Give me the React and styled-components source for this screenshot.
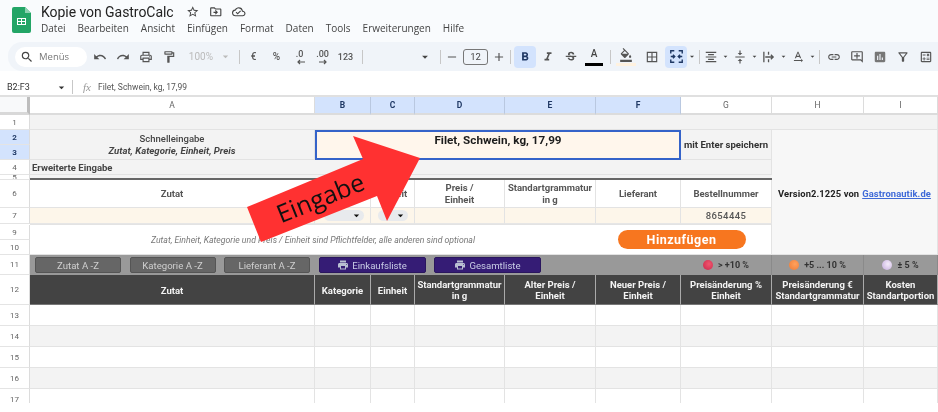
import styled, { createGlobalStyle } from "styled-components";
import {
  MdStarBorder, MdOutlineDriveFileMove, MdOutlineCloudDone, MdSearch, MdUndo, MdRedo,
  MdOutlinePrint, MdOutlineFormatPaint, MdArrowDropDown, MdAdd, MdRemove, MdFormatBold,
  MdFormatItalic, MdStrikethroughS, MdOutlineFormatColorFill, MdBorderAll,
  MdFormatAlignCenter, MdVerticalAlignCenter, MdTextRotationNone, MdLink, MdOutlineAddComment,
  MdInsertChart, MdOutlineFilterAlt, MdOutlineCalculate, MdLocalPrintshop,
} from "react-icons/md";

const GlobalStyle = createGlobalStyle`
  html, body { margin: 0; padding: 0; background: #fff; }
  body { font-family: Roboto, "Liberation Sans", sans-serif; overflow: hidden; }
`;

const Page = styled.div`
  width: 938px;
  height: 412px;
  position: relative;
  overflow: hidden;
  background: #fff;
  filter: blur(0.45px);
`;

// title bar
const TitleBar = styled.div`
  height: 42px;
  background: #f9fbfd;
  display: flex;
  padding-left: 12px;
  box-sizing: border-box;
`;
const LogoSlot = styled.div`
  padding-top: 7px;
`;
const TitleBlock = styled.div`
  margin-left: 10px;
  padding-top: 3px;
`;
const TitleRow = styled.div`
  display: flex;
  align-items: center;
  gap: 9.5px;
  height: 18px;
  color: #444;
  font-size: 13.5px;
`;
const DocName = styled.span`
  font-size: 14px;
  letter-spacing: -0.05px;
  color: #222;
  margin-right: 3px;
`;
const MenuRow = styled.div`
  display: flex;
  gap: 12px;
  margin-top: 0;
  font-family: "Open Sans", sans-serif;
  font-size: 10px;
  color: #444;
`;

// toolbar
const ToolbarWrap = styled.div`
  height: 29px;
  background: #f9fbfd;
  padding-left: 8px;
`;
const Toolbar = styled.div`
  height: 29px;
  background: #f0f4f9;
  border-radius: 14px 0 0 14px;
  display: flex;
  align-items: center;
  padding-left: 7px;
  overflow: hidden;
`;
const SearchPill = styled.div`
  width: 72px;
  height: 20px;
  flex: none;
  box-sizing: border-box;
  background: #fff;
  border-radius: 10px;
  display: flex;
  align-items: center;
  gap: 5px;
  padding-left: 5px;
  margin-right: 1px;
  color: #777;
  font-size: 9.5px;
  font-family: "Open Sans", sans-serif;
  svg { color: #444; font-size: 14px; }
`;
const ToolBtn = styled.div`
  width: ${(p) => p.$w || 23}px;
  height: 22px;
  flex: none;
  display: flex;
  align-items: center;
  justify-content: center;
  position: relative;
  border-radius: 4px;
  color: ${(p) => (p.$on ? "#1f3864" : "#555")};
  background: ${(p) => (p.$on ? "#d3e3fd" : "transparent")};
  font-size: 14px;
`;
const ToolText = styled.span`
  font-size: ${(p) => p.$size || 9}px;
  font-weight: 500;
  color: #555;
`;
const DecimalText = styled(ToolText)`
  margin-top: -5px;
`;
const DecimalArrow = styled.svg`
  position: absolute;
  left: 8px;
  bottom: 3px;
`;
const ZoomBox = styled.div`
  width: 52px;
  flex: none;
  display: flex;
  align-items: center;
  justify-content: flex-end;
  gap: 6px;
  color: #bbb;
  font-size: 10px;
  svg { font-size: 13px; }
`;
const FontBox = styled.div`
  width: 70px;
  flex: none;
  display: flex;
  justify-content: flex-end;
  padding-right: 3px;
  box-sizing: border-box;
  color: #444;
  font-size: 14px;
`;
const Sep = styled.div`
  width: 1px;
  height: 14px;
  flex: none;
  background: #c7c7c7;
  margin: 0 ${(p) => p.$r ?? 2}px 0 ${(p) => p.$l ?? 5}px;
`;
const SizeBox = styled.div`
  width: 25px;
  height: 16px;
  box-sizing: border-box;
  border: 1px solid #777;
  border-radius: 3px;
  font-size: 9.5px;
  color: #444;
  display: flex;
  align-items: center;
  justify-content: center;
  flex: none;
`;
const Caret = styled.div`
  width: ${(p) => p.$w || 10}px;
  flex: none;
  display: flex;
  justify-content: center;
  color: #444;
  font-size: 13px;
`;
const ColorBar = styled.i`
  position: absolute;
  left: 3px;
  right: 3px;
  bottom: 2px;
  height: 3px;
  background: ${(p) => p.$color};
`;
const ColorA = styled.span`
  font-size: 10px;
  font-weight: 500;
  margin-top: -6px;
  color: #444;
`;

// formula bar
const FormulaBar = styled.div`
  height: 26px;
  box-sizing: border-box;
  padding-top: 8px;
  display: flex;
  align-items: center;
  background: #fff;
  border-bottom: 2px solid #e0e0e0;
  font-size: 8.5px;
  color: #555;
`;
const NameBox = styled.div`
  width: 72px;
  padding-left: 7px;
  box-sizing: border-box;
  display: flex;
  justify-content: space-between;
  align-items: center;
  color: #333;
  font-size: 9px;
  svg { font-size: 13px; margin-right: 4px; }
`;
const Fx = styled.span`
  font-family: "Liberation Serif", serif;
  font-style: italic;
  font-size: 11px;
  color: #999;
  margin: 0 7px 0 10px;
`;

// sheet
const Sheet = styled.div`
  display: grid;
  height: 306px;
  overflow: hidden;
  grid-template-columns: 30px 285px 56px 44px 90px 91px 85px 91px 92px 74px;
  grid-template-rows: 18px 15px 15px 15px 15px 5px 28px 16px 1px 15px 15px 20px 30px 21px 21px 21px 21px 21px;
  font-size: 9.5px;
  color: #444;
`;
const Corner = styled.div`
  grid-area: 1 / 1;
  background: #f8f9fa;
  box-sizing: border-box;
  border-right: 3px solid #bdbdbd;
  border-bottom: 3px solid #d8d8d8;
`;
const ColHead = styled.div`
  grid-row: 1;
  grid-column: ${(p) => p.$col};
  display: flex;
  align-items: center;
  justify-content: center;
  box-sizing: border-box;
  background: ${(p) => (p.$active ? "#d3e3fd" : "#fff")};
  color: ${(p) => (p.$active ? "#1f3864" : "#666")};
  font-weight: ${(p) => (p.$active ? 700 : 400)};
  font-size: 8.5px;
  border-right: 1px solid ${(p) => (p.$active ? "#b9c8e0" : "#dcdcdc")};
  border-bottom: 2px solid #dcdcdc;
`;
const RowHead = styled.div`
  grid-row: ${(p) => p.$row};
  grid-column: 1;
  display: flex;
  align-items: center;
  justify-content: center;
  overflow: hidden;
  box-sizing: border-box;
  background: ${(p) => (p.$active ? "#d3e3fd" : "#fff")};
  color: ${(p) => (p.$active ? "#1f3864" : "#666")};
  font-weight: ${(p) => (p.$active ? 700 : 400)};
  font-size: 8px;
  border-right: 1px solid #dcdcdc;
  border-bottom: 1px solid #e4e4e4;
`;
const Cell = styled.div`
  grid-row: ${(p) => p.$row};
  grid-column: ${(p) => p.$col};
  display: flex;
  align-items: center;
  justify-content: center;
  text-align: center;
  box-sizing: border-box;
  min-width: 0;
  white-space: nowrap;
  background: ${(p) => p.$bg || "#fff"};
  border-right: 1px solid #e3e3e3;
  border-bottom: 1px solid #e3e3e3;
`;
const QuickLabel = styled(Cell)`
  flex-direction: column;
  padding-top: 1px;
  background: #f3f3f3;
  color: #444;
  font-weight: 500;
  line-height: 12px;
  em { font-weight: 700; font-size: 9.6px; }
`;
const QuickInput = styled(Cell)`
  background: #fff6ec;
  border: 2px solid #3563c9;
  padding-top: 1px;
  align-items: flex-start;
  color: #1c1c1c;
  font-weight: 700;
  font-size: 11.7px;
  line-height: 14px;
`;
const SaveHint = styled(Cell)`
  background: #f3f3f3;
  color: #333;
  font-weight: 700;
  font-size: 9.6px;
`;
const SectionTitle = styled(Cell)`
  background: #f3f3f3;
  justify-content: flex-start;
  padding: 1px 0 0 2px;
  font-weight: 700;
  color: #444;
`;
const InfoCell = styled(Cell)`
  background: #f7f7f7;
  color: #222;
  font-weight: 700;
  font-size: 9.4px;
  letter-spacing: 0.1px;
  padding-top: 2px;
  a { color: #3f6ad8; text-decoration: underline; margin-left: 3px; }
`;
const RuleCell = styled(Cell)`
  background: #f3f3f3;
  border-right: 0;
  border-bottom: 2px solid #666;
`;
const InputHead = styled(Cell)`
  white-space: pre-line;
  font-weight: 700;
  color: #555;
  font-size: 9.5px;
  line-height: 12px;
`;
const InputCell = styled(Cell)`
  background: #fdf6ea;
  color: #555;
  font-weight: 500;
  letter-spacing: 0.4px;
  justify-content: ${(p) => (p.$chip ? "flex-end" : "center")};
  padding-right: ${(p) => (p.$chip ? 6 : 0)}px;
  border-bottom: 1px solid #e6e6e6;
`;
const DropChip = styled.div`
  width: ${(p) => p.$w}px;
  height: 11px;
  border-radius: 6px;
  background: #e8eaed;
  display: flex;
  justify-content: flex-end;
  align-items: center;
  padding-right: 1px;
  box-sizing: border-box;
  color: #111;
  font-size: 13px;
`;
const HintCell = styled(Cell)`
  font-style: italic;
  color: #777;
  font-size: 8.7px;
  border-right: 0;
`;
const ActionCell = styled(Cell)`
  border-right: 1px solid #e3e3e3;
`;
const AddButton = styled.div`
  width: 128px;
  height: 19px;
  border-radius: 10px;
  background: #f7761f;
  color: #fff;
  font-size: 12.5px;
  font-weight: 700;
  letter-spacing: 0.5px;
  display: flex;
  align-items: center;
  justify-content: center;
  margin-right: 4px;
`;
const ButtonBand = styled.div`
  grid-row: 12;
  grid-column: 2 / 8;
  background: #999;
  display: flex;
  align-items: center;
  gap: 8.5px;
  padding-left: 5px;
  box-sizing: border-box;
`;
const SortButton = styled.div`
  width: ${(p) => p.$w || 86}px;
  height: 16px;
  box-sizing: border-box;
  flex: none;
  border-radius: 2px;
  border: 1px solid ${(p) => (p.$purple ? "#2a165e" : "#555")};
  background: ${(p) => (p.$purple ? "#351c75" : "#666")};
  color: ${(p) => (p.$purple ? "#c9cde6" : "#cfcfcf")};
  font-size: 9.6px;
  display: flex;
  align-items: center;
  justify-content: center;
  gap: 3px;
  svg { font-size: 12px; color: #b9c0d2; }
`;
const Legend = styled(Cell)`
  background: #999;
  gap: 5px;
  color: #333;
  font-weight: 700;
  font-size: 9px;
  border-right: 1px solid #8a8a8a;
  border-bottom: 0;
`;
const Ball = styled.i`
  width: 10px;
  height: 10px;
  border-radius: 50%;
  background: radial-gradient(circle at 60% 40%, ${(p) => p.$light}, ${(p) => p.$dark});
`;
const DarkHead = styled(Cell)`
  background: #434343;
  color: #f3f3f3;
  font-weight: 700;
  font-size: 9.5px;
  line-height: 11.5px;
  white-space: pre-line;
  padding-top: ${(p) => (p.$single ? 2 : 1)}px;
  border-right: 1px solid #aaa;
  border-bottom: 1px solid #777;
`;
const BodyCell = styled(Cell)`
  background: ${(p) => (p.$odd ? "#f3f3f3" : "#fff")};
`;

// overlay arrow, sits on top of the sheet
const ArrowSvg = styled.svg`
  position: absolute;
  left: 0;
  top: 0;
  width: 938px;
  height: 412px;
  pointer-events: none;
`;
const ArrowLabel = styled.div`
  position: absolute;
  left: 262px;
  top: 179px;
  width: 116px;
  text-align: center;
  font-family: "Open Sans", sans-serif;
  font-size: 25px;
  line-height: 36px;
  color: #111;
  transform: rotate(-22deg);
`;

const SheetsLogo = () => (
  <svg width="19" height="26" viewBox="0 0 19 26">
    <path d="M2 0h11l6 6v18a2 2 0 0 1-2 2H2a2 2 0 0 1-2-2V2a2 2 0 0 1 2-2z" fill="#23a566" />
    <path d="M13 0l6 6h-6z" fill="#8ed1b1" />
    <path d="M5 11h9v7H5z M6 12v2h3v-2z M10 12v2h3v-2z M6 15v2h3v-2z M10 15v2h3v-2z" fill="#fff" fillRule="evenodd" />
  </svg>
);

const MergeIcon = () => (
  <svg width="15" height="15" viewBox="0 0 17 17" fill="none" stroke="#1f3864" strokeWidth="1.6">
    <path d="M2 5V2h4M11 2h4v3M2 12v3h4M11 15h4v-3" />
    <path d="M2 8.5h4M4.5 6.5l2 2-2 2M15 8.5h-4M12.5 6.5l-2 2 2 2" />
  </svg>
);

const WrapIcon = () => (
  <svg width="14" height="14" viewBox="0 0 15 15" fill="none" stroke="#555" strokeWidth="1.4">
    <path d="M2 2v11M7 2v3M7 10v3M3.5 7.5h8M9.5 5l2.5 2.5L9.5 10" />
  </svg>
);

const ArrowGlyph = ({ left }) => (
  <DecimalArrow width="9" height="6" viewBox="0 0 9 6" fill="none" stroke="#555" strokeWidth="1.2">
    {left ? <path d="M9 3H2M4 1L2 3l2 2" /> : <path d="M0 3h7M5 1l2 2-2 2" />}
  </DecimalArrow>
);

const menus = ["Datei", "Bearbeiten", "Ansicht", "Einfügen", "Format", "Daten", "Tools", "Erweiterungen", "Hilfe"];
const columns = ["A", "B", "C", "D", "E", "F", "G", "H", "I"];
const activeCols = ["B", "C", "D", "E", "F"];
const rowLabels = [
  [2, 1], [3, 2], [4, 3], [5, 4], [6, 5], [7, 6], [8, 7], [10, 9], [11, 10],
  [12, 11], [13, 12], [14, 13], [15, 14], [16, 15], [17, 16], [18, 17],
];
const inputHeads = [
  [2, "Zutat"], [3, "Kategorie"], [4, "Einheit"], [5, "Preis /\nEinheit"],
  [6, "Standartgrammatur\nin g"], [7, "Lieferant"], [8, "Bestellnummer"],
];
const darkHeads = [
  "Zutat", "Kategorie", "Einheit", "Standartgrammatur\nin g", "Alter Preis /\nEinheit",
  "Neuer Preis /\nEinheit", "Preisänderung %\nEinheit", "Preisänderung €\nStandartgrammatur",
  "Kosten\nStandartportion",
];
const legends = [
  [8, "#f0566e", "#c9264a", "> +10 %"],
  [9, "#ffa15c", "#ee7a35", "+5 ... 10 %"],
  [10, "#f4ecfa", "#c3aadd", "± 5 %"],
];
const bodyRows = [14, 15, 16, 17, 18];

const App = () => (
  <Page>
    <GlobalStyle />
    <TitleBar>
      <LogoSlot><SheetsLogo /></LogoSlot>
      <TitleBlock>
        <TitleRow>
          <DocName>Kopie von GastroCalc</DocName>
          <MdStarBorder /><MdOutlineDriveFileMove /><MdOutlineCloudDone />
        </TitleRow>
        <MenuRow>{menus.map((m) => <span key={m}>{m}</span>)}</MenuRow>
      </TitleBlock>
    </TitleBar>

    <ToolbarWrap>
      <Toolbar>
        <SearchPill><MdSearch /> Menüs</SearchPill>
        <ToolBtn><MdUndo /></ToolBtn>
        <ToolBtn><MdRedo /></ToolBtn>
        <ToolBtn><MdOutlinePrint /></ToolBtn>
        <ToolBtn><MdOutlineFormatPaint /></ToolBtn>
        <ZoomBox>100% <MdArrowDropDown /></ZoomBox>
        <Sep $l={7} />
        <ToolBtn><ToolText $size={10}>€</ToolText></ToolBtn>
        <ToolBtn><ToolText $size={10}>%</ToolText></ToolBtn>
        <ToolBtn><DecimalText>.0</DecimalText><ArrowGlyph left /></ToolBtn>
        <ToolBtn><DecimalText>.00</DecimalText><ArrowGlyph /></ToolBtn>
        <ToolBtn><ToolText>123</ToolText></ToolBtn>
        <Sep />
        <FontBox><MdArrowDropDown /></FontBox>
        <Sep $r={0} />
        <ToolBtn $w={22}><MdRemove /></ToolBtn>
        <SizeBox>12</SizeBox>
        <ToolBtn $w={22}><MdAdd /></ToolBtn>
        <Sep $l={0} $r={3} />
        <ToolBtn $w={22} $on><MdFormatBold /></ToolBtn>
        <ToolBtn><MdFormatItalic /></ToolBtn>
        <ToolBtn><MdStrikethroughS /></ToolBtn>
        <ToolBtn $w={24}><ColorA>A</ColorA><ColorBar $color="#000" /></ToolBtn>
        <Sep $l={4} />
        <ToolBtn $w={26}><MdOutlineFormatColorFill style={{ marginTop: -4 }} /><ColorBar $color="#fff2e0" /></ToolBtn>
        <ToolBtn $w={26}><MdBorderAll /></ToolBtn>
        <ToolBtn $w={22} $on><MergeIcon /></ToolBtn>
        <Caret><MdArrowDropDown /></Caret>
        <Sep $l={2} $r={1} />
        <ToolBtn $w={20}><MdFormatAlignCenter /></ToolBtn>
        <Caret $w={9}><MdArrowDropDown /></Caret>
        <ToolBtn $w={20}><MdVerticalAlignCenter /></ToolBtn>
        <Caret $w={9}><MdArrowDropDown /></Caret>
        <ToolBtn $w={20}><WrapIcon /></ToolBtn>
        <Caret $w={9}><MdArrowDropDown /></Caret>
        <ToolBtn $w={20}><MdTextRotationNone /></ToolBtn>
        <Caret $w={9}><MdArrowDropDown /></Caret>
        <Sep $l={2} $r={2} />
        <ToolBtn><MdLink /></ToolBtn>
        <ToolBtn><MdOutlineAddComment /></ToolBtn>
        <ToolBtn><MdInsertChart color="#777" /></ToolBtn>
        <ToolBtn><MdOutlineFilterAlt /></ToolBtn>
        <ToolBtn><MdOutlineCalculate /></ToolBtn>
        <Caret><MdArrowDropDown /></Caret>
      </Toolbar>
    </ToolbarWrap>

    <FormulaBar>
      <NameBox>B2:F3 <MdArrowDropDown /></NameBox>
      <Sep $l={0} $r={0} />
      <Fx>fx</Fx>
      Filet, Schwein, kg, 17,99
    </FormulaBar>

    <Sheet>
      <Corner />
      {columns.map((c, i) => (
        <ColHead key={c} $col={i + 2} $active={activeCols.includes(c)}>{c}</ColHead>
      ))}
      {rowLabels.map(([row, label]) => (
        <RowHead key={row} $row={row} $active={label === 2 || label === 3}>{label}</RowHead>
      ))}

      <Cell $row={2} $col="2 / 11" $bg="#f3f3f3" />
      <QuickLabel $row="3 / 5" $col={2}>
        Schnelleingabe
        <em>Zutat, Kategorie, Einheit, Preis</em>
      </QuickLabel>
      <QuickInput $row="3 / 5" $col="3 / 8">Filet, Schwein, kg, 17,99</QuickInput>
      <SaveHint $row="3 / 5" $col={8}>mit Enter speichern</SaveHint>
      <InfoCell $row="3 / 12" $col="9 / 11">
        Version2.1225 von <a>Gastronautik.de</a>
      </InfoCell>
      <SectionTitle $row={5} $col="2 / 9">Erweiterte Eingabe</SectionTitle>
      <RuleCell $row={6} $col="2 / 9" />

      {inputHeads.map(([col, text]) => (
        <InputHead key={col} $row={7} $col={col}>{text}</InputHead>
      ))}
      <InputCell $row={8} $col={2} />
      <InputCell $row={8} $col={3} $chip><DropChip $w={40}><MdArrowDropDown /></DropChip></InputCell>
      <InputCell $row={8} $col={4} $chip><DropChip $w={30}><MdArrowDropDown /></DropChip></InputCell>
      <InputCell $row={8} $col={5} />
      <InputCell $row={8} $col={6} />
      <InputCell $row={8} $col={7} />
      <InputCell $row={8} $col={8}>8654445</InputCell>
      <Cell $row={9} $col="2 / 9" $bg="#d9d9d9" />

      <HintCell $row="10 / 12" $col="2 / 7">
        Zutat, Einheit, Kategorie und Preis / Einheit sind Pflichtfelder, alle anderen sind optional
      </HintCell>
      <ActionCell $row="10 / 12" $col="7 / 9"><AddButton>Hinzufügen</AddButton></ActionCell>

      <ButtonBand>
        <SortButton>Zutat A -Z</SortButton>
        <SortButton>Kategorie A -Z</SortButton>
        <SortButton>Lieferant A -Z</SortButton>
        <SortButton $purple $w={107}><MdLocalPrintshop /> Einkaufsliste</SortButton>
        <SortButton $purple $w={107}><MdLocalPrintshop /> Gesamtliste</SortButton>
      </ButtonBand>
      {legends.map(([col, light, dark, text]) => (
        <Legend key={col} $row={12} $col={col}>
          <Ball $light={light} $dark={dark} /> {text}
        </Legend>
      ))}

      {darkHeads.map((text, i) => (
        <DarkHead key={text} $row={13} $col={i + 2} $single={!text.includes("\n")}>{text}</DarkHead>
      ))}

      {bodyRows.map((row) =>
        columns.map((c, i) => (
          <BodyCell key={c + row} $row={row} $col={i + 2} $odd={row % 2 === 1} />
        ))
      )}
    </Sheet>

    <ArrowSvg viewBox="0 0 938 412">
      <path d="M420 158 L353 136 L363 159 L247 207 L261 242 L377 196 L387 221 Z" fill="#ff3131" />
    </ArrowSvg>
    <ArrowLabel>Eingabe</ArrowLabel>
  </Page>
);

export default App;
